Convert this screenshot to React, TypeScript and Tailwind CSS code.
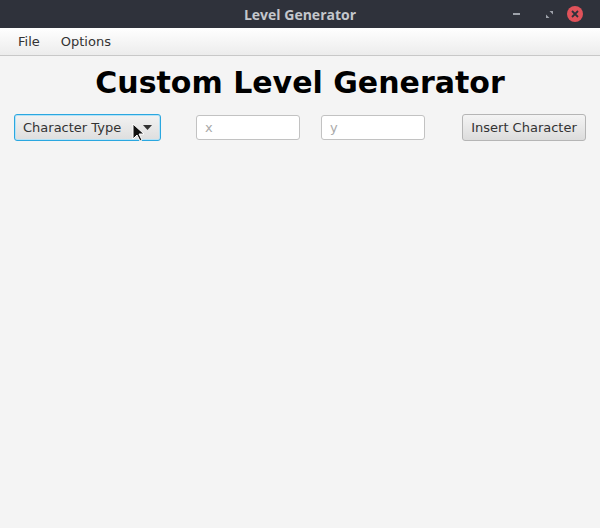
export default function App() {
    return (
        <div className="flex h-[528px] w-[600px] flex-col overflow-hidden bg-[#f4f4f4] font-['DejaVu_Sans',sans-serif]">
            <div className="relative flex h-[28px] items-center justify-center bg-[#2f323b]">
                <span className="text-[14px] font-bold text-[#c4c7cc] font-['Open_Sans','DejaVu_Sans',sans-serif]">Level Generator</span>
                <div className="absolute right-[17px] top-0 flex h-[28px] items-center">
                    <span className="block h-[2px] w-[7px] bg-[#9ea2aa]" />
                    <svg className="ml-[26px]" width="7" height="7" viewBox="0 0 8 8">
                        <path d="M4 0h4v4zM0 4l4 4H0z" fill="#9ea2aa" />
                    </svg>
                    <span className="ml-[14px] flex h-[16px] w-[16px] items-center justify-center rounded-full bg-[#e0525a]">
                        <svg width="8" height="8" viewBox="0 0 8 8">
                            <path d="M1 1l6 6M7 1L1 7" stroke="#2f323b" strokeWidth="1.8" />
                        </svg>
                    </span>
                </div>
            </div>

            <div className="flex h-[28px] items-center gap-[21px] border-b border-[#c8c8c8] bg-gradient-to-b from-[#ffffff] to-[#ececec] px-[18px] text-[13px] text-[#333]">
                <span>File</span>
                <span>Options</span>
            </div>

            <h1 className="mt-[8px] text-center text-[30px] font-bold leading-[38px] text-black">Custom Level Generator</h1>

            <div className="relative mt-[12px] flex items-center px-[14px] text-[13px]">
                <div className="flex h-[27px] w-[147px] items-center justify-between rounded-[3px] border border-[#2aa7e0] bg-gradient-to-b from-[#f2f2f2] to-[#dedede] pl-[8px] pr-[8px] text-[#333] shadow-[0_0_0_1px_#b5e2f6_inset]">
                    <span>Character Type</span>
                    <svg width="9" height="5" viewBox="0 0 9 5">
                        <path d="M0 0h9L4.5 5z" fill="#333" />
                    </svg>
                </div>
                <div className="ml-[35px] flex h-[25px] w-[104px] items-center rounded-[3px] border border-[#c2c2c2] bg-white px-[8px] text-[#aaa]">x</div>
                <div className="ml-[21px] flex h-[25px] w-[104px] items-center rounded-[3px] border border-[#c2c2c2] bg-white px-[8px] text-[#aaa]">y</div>
                <div className="ml-auto flex h-[27px] w-[124px] items-center justify-center rounded-[3px] border border-[#b5b5b5] bg-gradient-to-b from-[#f4f4f4] to-[#dcdcdc] text-[#333]">Insert Character</div>
                <svg className="absolute left-[132px] top-[9px]" width="12" height="19" viewBox="0 0 12 19">
                    <path d="M1 1v15l4-4 3 6 2-1-3-6h5z" fill="#111" stroke="#fff" strokeWidth="1" />
                </svg>
            </div>
        </div>
    );
}
